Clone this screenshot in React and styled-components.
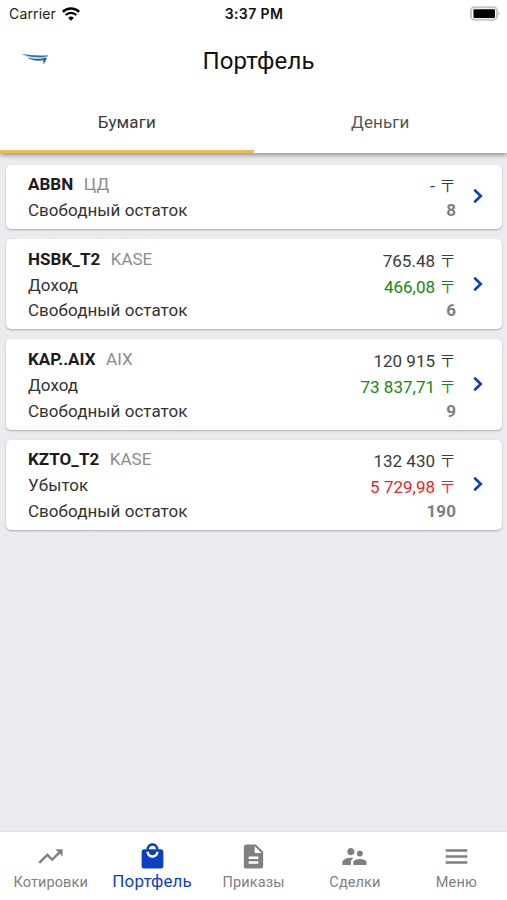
import React, { useState } from 'react';
import styled, { createGlobalStyle } from 'styled-components';
import {
  MdTrendingUp,
  MdLocalMall,
  MdDescription,
  MdSupervisorAccount,
  MdMenu,
} from 'react-icons/md';

// --- DATA ---
const papers = [
  { ticker: 'ABBN', market: 'ЦД', price: '-', free: '8' },
  { ticker: 'HSBK_T2', market: 'KASE', price: '765.48', profit: '466,08', free: '6' },
  { ticker: 'KAP..AIX', market: 'AIX', price: '120 915', profit: '73 837,71', free: '9' },
  { ticker: 'KZTO_T2', market: 'KASE', price: '132 430', loss: '5 729,98', free: '190' },
];

const navItems = [
  { id: 'quotes', label: 'Котировки', icon: MdTrendingUp },
  { id: 'portfolio', label: 'Портфель', icon: MdLocalMall },
  { id: 'orders', label: 'Приказы', icon: MdDescription },
  { id: 'deals', label: 'Сделки', icon: MdSupervisorAccount },
  { id: 'menu', label: 'Меню', icon: MdMenu },
];

// --- STYLED COMPONENTS ---
const GlobalStyle = createGlobalStyle`
  * { box-sizing: border-box; }
  body { margin: 0; background: #e9ebee; }
  button { font: inherit; border: none; background: none; padding: 0; cursor: pointer; }
`;
const Screen = styled.div`
  height: 100vh;
  display: flex; flex-direction: column;
  background: #e9ebee;
  font-family: Roboto, "Liberation Sans", "Noto Sans CJK JP", sans-serif;
  color: #333;
`;
const Top = styled.header`
  flex: none; height: 152.5px;
  display: flex; flex-direction: column;
  background: #fff;
  box-shadow: 0 2px 5px rgba(0, 0, 0, 0.4);
`;
const StatusBar = styled.div`
  display: grid; grid-template-columns: 1fr auto 1fr; align-items: center;
  height: 28px; padding: 0 6px 0 9px;
  font-family: Inter, sans-serif; font-size: 14px; line-height: 28px; color: #222;
`;
const Carrier = styled.div`
  display: flex; align-items: center; gap: 6px;
  letter-spacing: 0.15px;
`;
const Clock = styled.div`
  margin-right: 2px;
  font-weight: 600; color: #111; letter-spacing: 0.4px;
`;
const BatteryIcon = styled.svg`
  justify-self: end; display: block;
`;
const TitleBar = styled.div`
  display: grid; grid-template-columns: 1fr auto 1fr; align-items: center;
  height: 66px; padding: 0 16px 0 21px;
`;
const Title = styled.h1`
  margin: 0 0 0 5px;
  font-size: 24px; font-weight: 400; line-height: 30px; letter-spacing: 0.15px;
  color: #111;
`;
const Tabs = styled.div`
  flex: 1; display: flex;
`;
const Tab = styled.button`
  && {
    flex: 1; padding: 1px 0 0 0;
    font-size: 17px; letter-spacing: 0.1px;
    color: ${({ $active }) => ($active ? '#3a3a3a' : '#555')};
    border-bottom: 3px solid ${({ $active }) => ($active ? '#ecbc50' : 'transparent')};
  }
`;
const List = styled.main`
  flex: 1; display: flex; flex-direction: column; gap: 10.1px;
  padding: 12px 5px 0 6px;
`;
const Card = styled.article`
  display: flex; align-items: center;
  height: ${({ $short }) => ($short ? '64.5px' : '90.2px')};
  padding: 2.4px 19px 0 22px;
  background: #fff; border-radius: 5px;
  box-shadow: 0 1px 2px rgba(0, 0, 0, 0.28);
`;
const Names = styled.div`
  flex: 1; font-size: 17px; line-height: 25.7px; letter-spacing: 0.04px;
`;
const Line = styled.div`
  height: 25.7px;
`;
const Amounts = styled.div`
  text-align: right; font-size: 17px; line-height: 25.7px;
`;
const Ticker = styled.span`
  font-weight: 700; color: #1b1b1b;
`;
const Market = styled.span`
  margin-left: 10.5px; color: #8c8c8c; letter-spacing: 0;
`;
const Amount = styled.div`
  height: 25.7px; line-height: 29px;
  color: ${({ $tone }) => ({ profit: '#128a12', loss: '#ee2326' })[$tone] || '#3a3a3a'};
`;
const Currency = styled.span`
  margin-left: 4px;
  font-family: "Noto Sans CJK JP", sans-serif; font-weight: 300; line-height: 1;
`;
const Free = styled.div`
  height: 25.7px;
  font-weight: 700; color: #808080; letter-spacing: 0.1px;
`;
const Chevron = styled.svg`
  display: block; margin: 0 0 3px 17px;
`;
const Nav = styled.nav`
  flex: none; height: 69px; display: flex;
  background: #fff; border-top: 1px solid #e0e1e4;
`;
const NavButton = styled.button`
  && {
    flex: 1 1 0; min-width: 0;
    display: flex; flex-direction: column; align-items: center;
    padding-top: 10px;
    color: ${({ $active }) => ($active ? '#0c40c4' : '#808080')};
    font-size: ${({ $active }) => ($active ? '17px' : '14.5px')};
    letter-spacing: 0.12px;
    line-height: ${({ $active }) => ($active ? '20px' : '24px')};
  }
  svg { width: 29px; height: 29px; flex: none; }
`;
const NavLabel = styled.span`
  white-space: nowrap;
`;

const Logo = () => (
  <svg width="28" height="16" viewBox="0 0 28 16">
    <path d="M0.300 0.800C8 2.200 17 2.800 27 2.300C26.800 3.200 26.300 3.900 25.500 4.300C16 5.200 7 4.300 0.300 0.800Z" fill="#2f78b8" />
    <path d="M6 4.300C12 6.200 19 6.300 25.800 4.500C25.300 7 24.300 9.300 22.300 11.300C22.600 9 22.500 8 22 7.300C16 8.300 10 7.500 6 4.300Z" fill="#1f62a8" />
    <path d="M5 3.300C12 5.400 19 5.400 26 3.900" stroke="#b9d9ef" strokeWidth="0.900" fill="none" />
  </svg>
);

const Wifi = () => (
  <svg width="18" height="14" viewBox="0 0 18 14" fill="none" stroke="#000" strokeWidth="2.300">
    <path d="M0.800 4.900A11.600 11.600 0 0 1 17.200 4.900" />
    <path d="M3.700 8A7.500 7.500 0 0 1 14.300 8" />
    <path d="M9 13.700L6.200 10.900A4 4 0 0 1 11.800 10.900Z" fill="#000" stroke="none" />
  </svg>
);

const PortfolioRow = ({ paper }) => {
  const result = paper.profit || paper.loss;
  return (
    <Card $short={!result}>
      <Names>
        <Line>
          <Ticker>{paper.ticker}</Ticker>
          <Market>{paper.market}</Market>
        </Line>
        {result && <Line>{paper.profit ? 'Доход' : 'Убыток'}</Line>}
        <Line>Свободный остаток</Line>
      </Names>
      <Amounts>
        <Amount>{paper.price}<Currency>〒</Currency></Amount>
        {result && (
          <Amount $tone={paper.profit ? 'profit' : 'loss'}>
            {result}<Currency>〒</Currency>
          </Amount>
        )}
        <Free>{paper.free}</Free>
      </Amounts>
      <Chevron width="10" height="16" viewBox="0 0 10 16">
        <path d="M1.300 1.700L7.800 8L1.300 14.300" fill="none" stroke="#0c40c4" strokeWidth="2.600" />
      </Chevron>
    </Card>
  );
};

const App = () => {
  const [tab, setTab] = useState('papers');
  const [page, setPage] = useState('portfolio');

  return (
    <Screen>
      <GlobalStyle />
      <Top>
        <StatusBar>
          <Carrier>Carrier <Wifi /></Carrier>
          <Clock>3:37 PM</Clock>
          <BatteryIcon width="31" height="16" viewBox="0 0 31 16">
            <rect x="1" y="1.200" width="26" height="12.600" rx="3.500" fill="#fff" stroke="#c6c6c6" strokeWidth="2" />
            <rect x="3.500" y="3.200" width="21.500" height="8.800" rx="1" fill="#000" />
            <path d="M28.500 5.500Q31 7.500 28.500 9.500Z" fill="#b5b5b5" />
          </BatteryIcon>
        </StatusBar>
        <TitleBar>
          <Logo />
          <Title>Портфель</Title>
        </TitleBar>
        <Tabs>
          <Tab $active={tab === 'papers'} onClick={() => setTab('papers')}>Бумаги</Tab>
          <Tab $active={tab === 'money'} onClick={() => setTab('money')}>Деньги</Tab>
        </Tabs>
      </Top>
      <List>
        {papers.map((paper) => (
          <PortfolioRow key={paper.ticker} paper={paper} />
        ))}
      </List>
      <Nav>
        {navItems.map(({ id, label, icon: Icon }) => (
          <NavButton key={id} $active={page === id} onClick={() => setPage(id)}>
            <Icon />
            <NavLabel>{label}</NavLabel>
          </NavButton>
        ))}
      </Nav>
    </Screen>
  );
};

export default App;
